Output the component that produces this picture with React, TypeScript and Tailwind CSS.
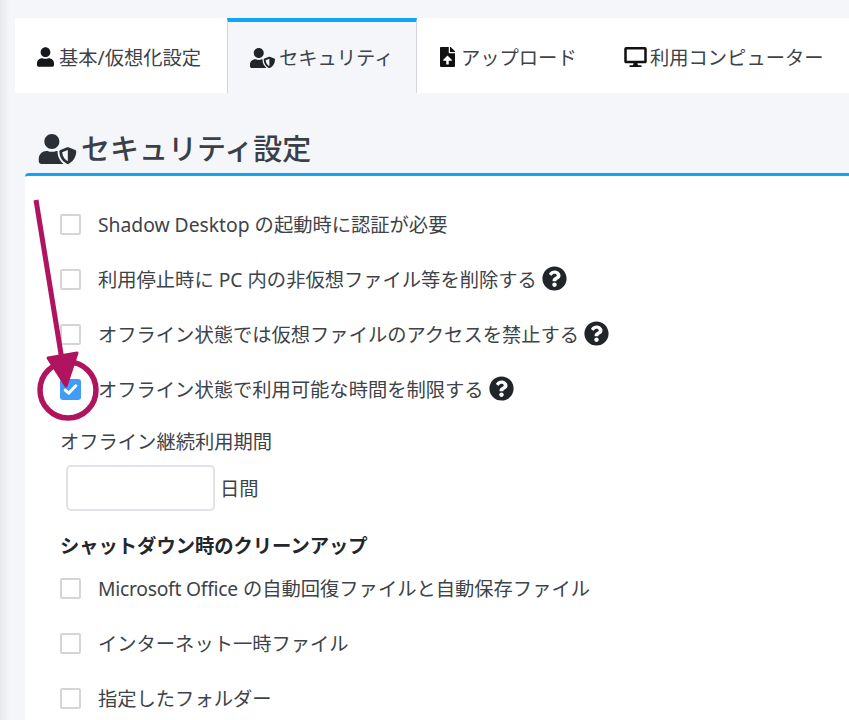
import React from "react";

const font = { fontFamily: '"Noto Sans","Noto Sans CJK JP",sans-serif' };

const UserIcon = ({ className = "" }: { className?: string }) => (
  <svg viewBox="0 0 448 512" className={className} fill="currentColor">
    <path d="M224 256c70.7 0 128-57.3 128-128S294.7 0 224 0 96 57.3 96 128s57.3 128 128 128zm89.6 32h-16.7c-22.2 10.2-46.9 16-72.9 16s-50.6-5.8-72.9-16h-16.7C60.2 288 0 348.2 0 422.4V464c0 26.5 21.5 48 48 48h352c26.5 0 48-21.5 48-48v-41.6c0-74.2-60.2-134.4-134.4-134.4z" />
  </svg>
);
const UserShield = ({ className = "" }: { className?: string }) => (
  <svg viewBox="0 0 640 512" className={className} fill="currentColor" fillRule="evenodd">
    <path d="M622.3 271.1l-115.2-45c-4.1-1.6-12.6-3.7-22.2 0l-115.2 45c-10.7 4.2-17.7 14-17.7 24.9 0 111.6 68.7 188.8 132.9 213.9 9.6 3.7 18 1.6 22.2 0C558.4 489.9 640 420.5 640 296c0-10.9-7-20.7-17.7-24.9zM496 462.4V273.3l-95.5 37.3c5.6 87.1 60.9 135.4 95.5 151.8zM224 256c70.7 0 128-57.3 128-128S294.7 0 224 0 96 57.3 96 128s57.3 128 128 128zm96 40c0-2.5.8-4.8 1.1-7.2-2.5-.1-4.9-.8-7.5-.8h-16.7c-22.2 10.2-46.9 16-72.9 16s-50.6-5.8-72.9-16h-16.7C60.2 288 0 348.2 0 422.4V464c0 26.5 21.5 48 48 48h352c6.8 0 13.3-1.5 19.2-4-54-42.9-99.2-116.7-99.2-212z" />
  </svg>
);
const FileUpload = ({ className = "" }: { className?: string }) => (
  <svg viewBox="0 0 384 512" className={className} fill="currentColor">
    <path d="M224 136V0H24C10.7 0 0 10.7 0 24v464c0 13.3 10.7 24 24 24h336c13.3 0 24-10.7 24-24V160H248c-13.2 0-24-10.8-24-24zm65.18 216.01H224v80c0 8.84-7.16 16-16 16h-32c-8.84 0-16-7.16-16-16v-80H94.82c-14.28 0-21.41-17.29-11.27-27.36l96.42-95.7c6.65-6.61 17.39-6.61 24.04 0l96.42 95.7c10.15 10.07 3.03 27.36-11.25 27.36zM377 105L279.1 7c-4.5-4.5-10.6-7-17-7H256v128h128v-6.1c0-6.3-2.5-12.4-7-16.9z" />
  </svg>
);
const Desktop = ({ className = "" }: { className?: string }) => (
  <svg viewBox="0 0 576 512" className={className} fill="currentColor">
    <path d="M528 0H48C21.5 0 0 21.5 0 48v320c0 26.5 21.5 48 48 48h192l-16 48h-72c-13.3 0-24 10.7-24 24s10.7 24 24 24h272c13.3 0 24-10.7 24-24s-10.7-24-24-24h-72l-16-48h192c26.5 0 48-21.5 48-48V48c0-26.5-21.5-48-48-48zm-16 352H64V64h448v288z" />
  </svg>
);
const Question = () => (
  <svg viewBox="0 0 512 512" className="w-[25px] h-[25px] ml-[5px] -mt-[2px] shrink-0 text-[#212529]" fill="currentColor">
    <path d="M504 256c0 136.997-111.043 248-248 248S8 392.997 8 256C8 119.083 119.043 8 256 8s248 111.083 248 248zM262.655 90c-54.497 0-89.255 22.957-116.549 63.758-3.536 5.286-2.353 12.415 2.715 16.258l34.699 26.31c5.205 3.947 12.621 3.008 16.665-2.122 17.864-22.658 30.113-35.797 57.303-35.797 20.429 0 45.698 13.148 45.698 32.958 0 14.976-12.363 22.667-32.534 33.976C247.128 238.528 216 254.941 216 296v4c0 6.627 5.373 12 12 12h56c6.627 0 12-5.373 12-12v-1.333c0-28.462 83.186-29.647 83.186-106.667 0-58.002-60.165-102-116.531-102zM256 338c-25.365 0-46 20.635-46 46 0 25.364 20.635 46 46 46s46-20.636 46-46c0-25.365-20.635-46-46-46z" />
  </svg>
);

const Check = ({ text, help, checked, mb = "mb-[30px]" }: { text: React.ReactNode; help?: boolean; checked?: boolean; mb?: string }) => (
  <div className={`flex items-center h-[25px] ${mb}`}>
    {checked ? (
      <span className="w-[21px] h-[21px] -mt-[1px] rounded-[3px] bg-[#3f9cf8] flex items-center justify-center shrink-0">
        <svg viewBox="0 0 16 16" className="w-[17px] h-[17px]" fill="none" stroke="#fff" strokeWidth="2.8" strokeLinecap="round" strokeLinejoin="round">
          <path d="M3 8.5l3.3 3L13 4.5" />
        </svg>
      </span>
    ) : (
      <span className="w-[21px] h-[21px] -mt-[1px] rounded-[2px] bg-white border-2 border-[#d3d5d7] shrink-0" />
    )}
    <span className="ml-[17px] text-[19.3px] leading-[25px] text-[#3d4349] whitespace-nowrap">{text}</span>
    {help && <Question />}
  </div>
);

const Tab = ({ icon, label, w, active }: { icon: React.ReactNode; label: string; w: string; active?: boolean }) => (
  <div
    className={`flex items-center h-[75px] shrink-0 text-[19.3px] text-[#3d4349] whitespace-nowrap ${w} ${
      active ? "bg-[#f4f6f9] border-t-[4px] border-x border-t-[#0ea5f9] border-x-[#d2d6da] pl-[22px] pt-[1px]" : "bg-white pt-[5px]"
    }`}
  >
    {icon}
    {label}
  </div>
);

export default function App() {
  return (
    <div style={font} className="relative w-[849px] h-[720px] overflow-hidden bg-[#f4f6f9]">
      <div className="absolute left-0 top-0 w-[10px] h-[720px] bg-gradient-to-r from-[#e6e8ec] to-[#f4f6f9]" />
      <div className="relative pl-[15px] pt-[18px]">
        <div className="flex bg-white h-[75px]">
          <Tab w="w-[212px] pl-[22px]" label="基本/仮想化設定" icon={<UserIcon className="w-[17px] h-[20px] mr-[5px] -mt-[2px] text-[#16181b]" />} />
          <Tab w="w-[190px]" active label="セキュリティ" icon={<UserShield className="w-[25px] h-[20px] mr-[4px] text-[#212529]" />} />
          <Tab w="w-[182px] pl-[23px]" label="アップロード" icon={<FileUpload className="w-[15px] h-[20px] mr-[6px] -mt-[2px] text-[#111]" />} />
          <Tab w="w-[250px] pl-[25px]" label="利用コンピューター" icon={<Desktop className="w-[23px] h-[20px] mr-[3px] -mt-[2px] text-[#111]" />} />
        </div>
      </div>
      <div className="relative pl-[25px]">
        <div className="flex items-center h-[40px] mt-[36px] pl-[13px] text-[29px] leading-[40px] font-medium text-[#3a4046] whitespace-nowrap">
          <UserShield className="w-[39px] h-[30px] mr-[4px] text-[#2b3036]" />
          セキュリティ設定
        </div>
        <div className="mt-[4px] bg-white border-t-[3px] border-[#0ea5f9] rounded-tl-[4px] pl-[35px] pt-[36px] h-[560px]">
          <Check text="Shadow Desktop の起動時に認証が必要" />
          <Check text="利用停止時に PC 内の非仮想ファイル等を削除する" help />
          <Check text="オフライン状態では仮想ファイルのアクセスを禁止する" help />
          <Check text="オフライン状態で利用可能な時間を制限する" help checked mb="mb-[27px]" />
          <div className="text-[19.3px] leading-[25px] text-[#3d4349] whitespace-nowrap">オフライン継続利用期間</div>
          <div className="flex items-center mt-[11px] ml-[6px]">
            <input className="w-[149px] h-[46px] bg-white border-2 border-[#dfe3e8] rounded-[5px]" />
            <span className="ml-[5px] mt-[2px] text-[19.3px] text-[#3d4349]">日間</span>
          </div>
          <div className="mt-[22px] mb-[18px] text-[19.3px] leading-[25px] font-bold text-[#23272b] whitespace-nowrap">シャットダウン時のクリーンアップ</div>
          <Check text={<><span className="tracking-[-0.25px]">Microsoft Office</span> の自動回復ファイルと自動保存ファイル</>} />
          <Check text="インターネット一時ファイル" />
          <Check text="指定したフォルダー" />
        </div>
      </div>
      <svg className="absolute left-0 top-0 pointer-events-none" width="849" height="720" viewBox="0 0 849 720">
        <path d="M36 200L62 360" fill="none" stroke="#b0145f" strokeWidth="5" />
        <path d="M48 358L77 353L66 386Z" fill="#b0145f" stroke="#b0145f" strokeWidth="3" strokeLinejoin="round" />
        <circle cx="68" cy="390" r="28" fill="none" stroke="#b0145f" strokeWidth="5.5" />
      </svg>
    </div>
  );
}
